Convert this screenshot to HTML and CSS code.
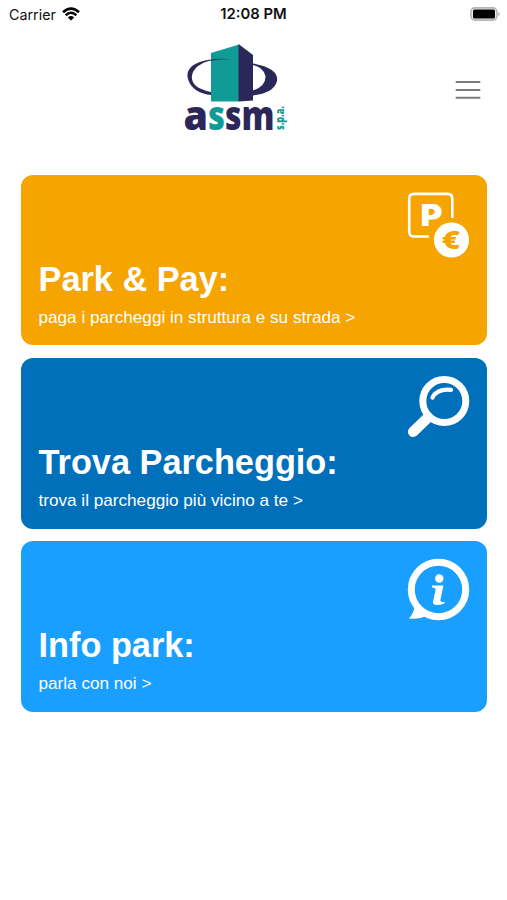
FILE: index.html
```html
<!DOCTYPE html>
<html lang="it">
<head>
<meta charset="utf-8">
<title>ASSM Park</title>
<link rel="stylesheet" href="styles.css">
</head>
<body>
<div class="status">
  <div class="carrier"><span>Carrier</span>
    <svg width="18" height="14" viewBox="0 0 18 14" fill="none" stroke="#000" stroke-width="2.5"><path d="M1 5.2Q9-2 17 5.2M3.7 8.2Q9 3.4 14.3 8.2"/><path d="M5.8 10.4Q9 7.8 12.2 10.4L9 13.6Z" fill="#000" stroke="none"/></svg>
  </div>
  <div class="time">12:08 PM</div>
  <svg class="battery" width="31" height="14" viewBox="0 0 31 14"><rect x=".9" y=".9" width="26" height="12.2" rx="4" fill="#eee" stroke="#b5b5b5" stroke-width="1.6"/><rect x="3" y="2.500" width="22" height="9" rx="1.5"/><path d="M28.3 4.7Q31 7 28.3 9.3Z" fill="#aaa"/></svg>
</div>
<header class="header">
  <svg class="logo" width="106" height="106" viewBox="0 0 106 106">
    <path d="M28 17.500C13 19 1 25 4 37C6.500 47 17 52 27 53V50C17 48 9 44 8 37C7 27 17 20 28 18.500Z" fill="#2b2759"/>
    <path d="M69 23Q80 26 81.500 34Q82 44 69 48.500V53.500Q90 51 93 39Q95 26 69 21.500Z" fill="#2b2759"/>
    <path d="M27 11L55 2.500V59.500H27Z" fill="#119b97"/>
    <path d="M54.500 2L69 13V58.500L54.500 59.500Z" fill="#2b2759"/>
    <path d="M27 17.600Q37 16 47 17.400Q37 16.800 27 18.700Z" fill="#2b2759"/>
    <text class="wordmark" x="-.5" y="87.500" textLength="24.500" lengthAdjust="spacingAndGlyphs">a</text>
    <text class="wordmark teal" x="24" y="87.500" textLength="17" lengthAdjust="spacingAndGlyphs">s</text>
    <text class="wordmark" x="41" y="87.500" textLength="16.500" lengthAdjust="spacingAndGlyphs">s</text>
    <text class="wordmark" x="57.500" y="87.500" textLength="33" lengthAdjust="spacingAndGlyphs">m</text>
    <text class="spa" transform="translate(99.500 88) rotate(-90)" textLength="24" lengthAdjust="spacingAndGlyphs">s.p.a.</text>
  </svg>
  <svg class="menu" width="26" height="20" viewBox="0 0 26 20" stroke="#7b7b7b" stroke-width="2" stroke-linecap="round"><path d="M1.500 2H24.500M1.500 10H24.500M1.500 17.700H24.500"/></svg>
</header>
<main class="cards">
  <section class="card pay">
    <svg class="icon" width="64" height="68" viewBox="0 0 64 68">
      <path d="M23 45.500H8Q3.200 45.500 3.200 40.700V7.700Q3.200 2.900 8 2.900H41.500Q46.300 2.900 46.300 7.700V27" fill="none" stroke="#fff" stroke-width="2.600"/>
      <text class="parking" x="14.500" y="34.500" textLength="22" lengthAdjust="spacingAndGlyphs">P</text>
      <circle cx="45.500" cy="49" r="17.600" fill="#fff"/>
      <text class="euro" x="36" y="57.500" textLength="18" lengthAdjust="spacingAndGlyphs">€</text>
    </svg>
    <h2>Park &amp; Pay:</h2>
    <p>paga i parcheggi in struttura e su strada &gt;</p>
  </section>
  <section class="card find">
    <svg class="icon" width="64" height="68" viewBox="0 0 64 68" fill="none" stroke="#fff" stroke-linecap="round">
      <circle cx="38.300" cy="27" r="21.500" stroke-width="7"/>
      <path d="M26.500 23.500Q31 14.500 45 15.800" stroke-width="4.200"/>
      <path d="M22 43.500L7.200 57.800" stroke-width="10.500"/>
    </svg>
    <h2>Trova Parcheggio:</h2>
    <p>trova il parcheggio più vicino a te &gt;</p>
  </section>
  <section class="card info">
    <svg class="icon" width="64" height="68" viewBox="0 0 64 68">
      <circle cx="32.500" cy="32.500" r="27.200" fill="none" stroke="#fff" stroke-width="7"/>
      <path d="M8 48.500Q9 54.500 3 61.500Q13 62.500 21 58.500L13 48.500Z" fill="#fff"/>
      <circle cx="33.300" cy="21.500" r="4.200" fill="#fff"/>
      <path d="M26 28.500H37.500L34.500 42.500Q34 45 36 45L38.500 44.700V46.500Q34 48 30 48Q25.800 47.500 27.500 42.500L29.500 33Q30 30.500 26 30.500Z" fill="#fff"/>
    </svg>
    <h2>Info park:</h2>
    <p>parla con noi &gt;</p>
  </section>
</main>
</body>
</html>
```

FILE: styles.css
```css
* { box-sizing: border-box; }

body {
  margin: 0;
  min-height: 900px;
  background: #fff;
  font-family: "Liberation Sans", Arial, sans-serif;
}

.status {
  display: grid;
  grid-template-columns: 1fr auto 1fr;
  align-items: center;
  height: 27px;
  padding: 0 6px 0 9px;
  font: 14.3px/27px Inter, sans-serif;
  color: #111;
}

.carrier { display: flex; align-items: center; gap: 6px; }
.time { margin: 0 2.500px 0 -.5px; padding-top: 1px; font-weight: 600; font-size: 14.800px; }
.battery { justify-self: end; }

.header {
  display: grid;
  grid-template-columns: 1fr 106px 1fr;
  height: 147.500px;
  padding: 15px 26px 0 0;
}

.logo { grid-column: 2; margin-left: -4px; }
.menu { justify-self: end; margin-top: 38px; }

.wordmark { font: 800 40px "Open Sans", sans-serif; fill: #2b2759; }
.wordmark.teal { fill: #119b97; }
.spa { font: 800 13px "Open Sans", sans-serif; fill: #119b97; }

.cards {
  display: flex;
  flex-direction: column;
  gap: 12.500px;
  padding: 0 20px 0 20.500px;
}

.card {
  display: flex;
  flex-direction: column;
  width: 466.800px;
  height: 170.800px;
  padding: 16px 18px;
  border-radius: 12px;
  color: #fff;
}

.pay { background: #f5a400; }
.find { background: #0070ba; }
.info { background: #189fff; }

.icon { align-self: flex-end; flex: none; margin-right: -1px; }

.card h2 {
  margin: 0;
  font-size: 34.300px;
  line-height: 40px;
  white-space: nowrap;
}

.card p {
  margin: 8px 0 0;
  font-size: 17.150px;
  line-height: 20px;
  white-space: nowrap;
}

.parking { font: 900 30px Inter, sans-serif; fill: #fff; }
.euro { font: 800 24px "Open Sans", sans-serif; fill: #f5a400; }
```
